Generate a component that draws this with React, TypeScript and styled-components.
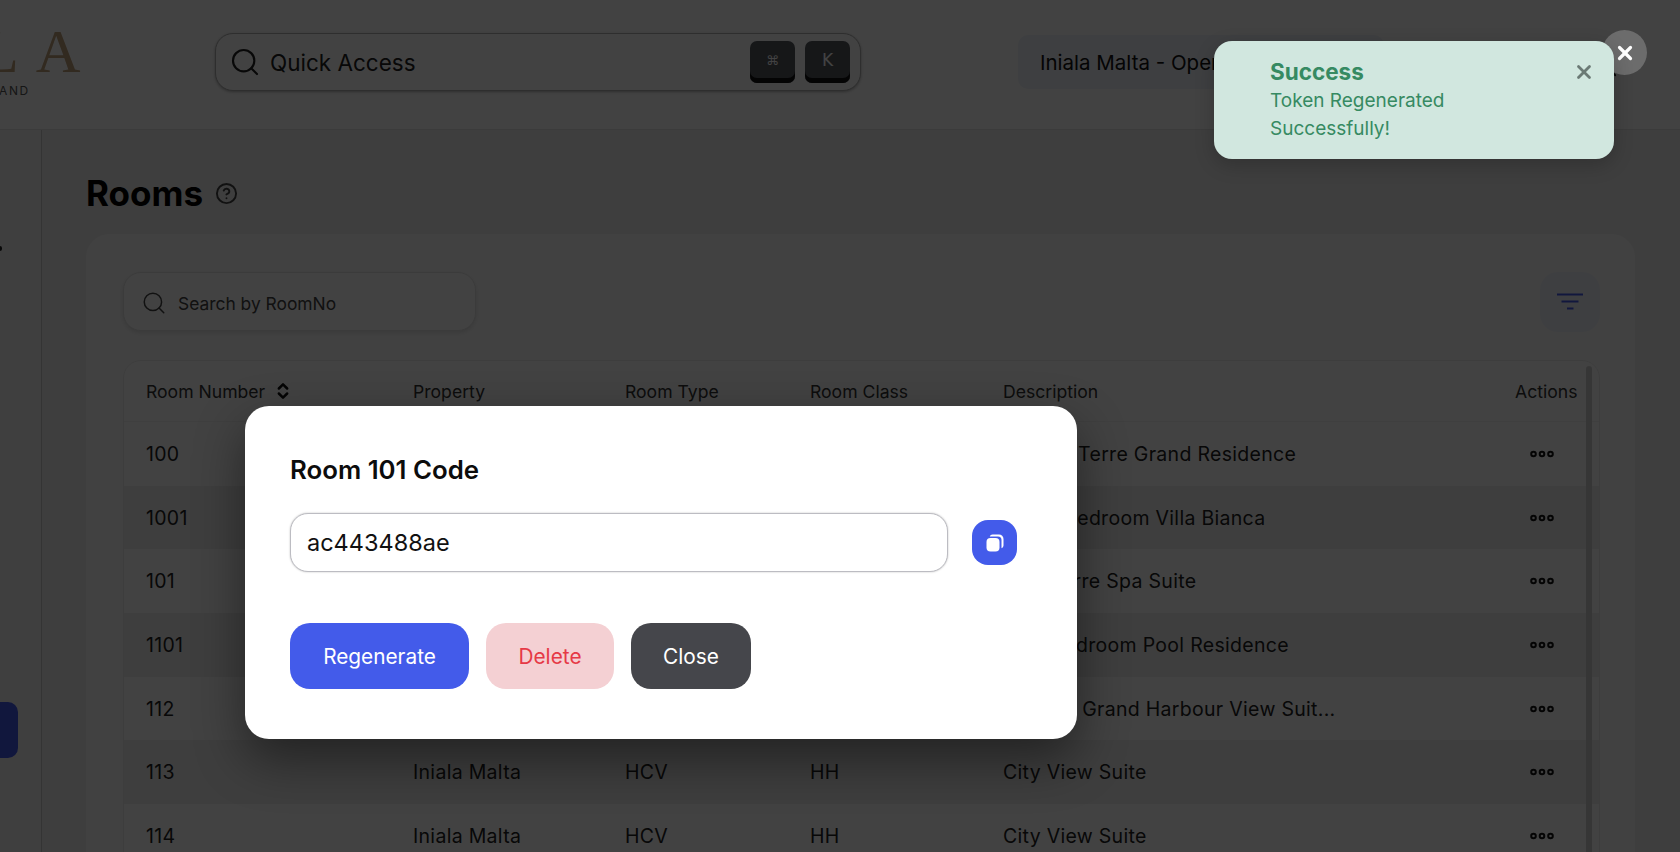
import React from 'react'
import styled, { createGlobalStyle } from 'styled-components'
import { ChevronsUpDown, CircleHelp, Search, X } from 'lucide-react'

const rooms = [
    { no: '100', type: 'HCV', cls: 'HH', desc: 'Pieds à Terre Grand Residence' },
    { no: '1001', type: 'HCV', cls: 'HH', desc: 'Three Bedroom Villa Bianca' },
    { no: '101', type: 'HCV', cls: 'HH', desc: 'Pied Terre Spa Suite' },
    { no: '1101', type: 'HCV', cls: 'HH', desc: 'Four Bedroom Pool Residence' },
    { no: '112', type: 'HCV', cls: 'HH', desc: 'Premier Grand Harbour View Suit...' },
    { no: '113', type: 'HCV', cls: 'HH', desc: 'City View Suite' },
    { no: '114', type: 'HCV', cls: 'HH', desc: 'City View Suite' },
]

const GlobalStyle = createGlobalStyle`
    html, body {
        margin: 0;
        height: 100%;
        overflow: hidden;
        font-family: Inter, "Noto Sans", sans-serif;
    }
    * { box-sizing: border-box; }
`

const Page = styled.div`
    position: relative;
    display: flex;
    flex-direction: column;
    height: 852px;
    overflow: hidden;
    background: #f0f0f0;
    color: #222;
`

const Header = styled.header`
    display: flex;
    align-items: center;
    flex: none;
    height: 130px;
    background: #fff;
    border-bottom: 1px solid #e2e2e2;
`

const Logo = styled.div`
    flex: none;
    width: 215px;
    height: 80px;
    overflow: hidden;
    color: #c0a17b;
`

const LogoWord = styled.div`
    margin-left: -19px;
    font-family: "Liberation Serif", serif;
    font-size: 62px;
    line-height: 52px;
    letter-spacing: 17px;
`

const LogoTag = styled.div`
    margin: 7px 0 0 -1px;
    font-size: 12px;
    line-height: 14px;
    letter-spacing: 1.6px;
    color: #555;
`

const QuickSearch = styled.div`
    display: flex;
    align-items: center;
    width: 646px;
    height: 58px;
    margin-top: -5px;
    padding: 0 10px 0 13px;
    gap: 9px;
    background: #fff;
    border: 1.5px solid #b0b0b0;
    border-radius: 18px;
    box-shadow: 0 1px 3px rgba(0, 0, 0, 0.3);
    font-size: 22.5px;
    color: #222;
`

const QuickLabel = styled.span`
    flex: 1;
`

const Key = styled.span<{ $small?: boolean }>`
    display: flex;
    align-items: center;
    justify-content: center;
    width: 45px;
    height: 42px;
    margin-left: 1px;
    padding-bottom: 4px;
    background: #55585f;
    border-radius: 7px;
    box-shadow: inset 0 -5px 0 #131313;
    font-family: "DejaVu Sans", Inter, sans-serif;
    font-size: ${p => (p.$small ? '13px' : '17px')};
    color: #fff;
`

const SiteSelect = styled.div`
    display: flex;
    align-items: center;
    width: 366px;
    height: 54px;
    margin: -5px 0 0 157px;
    padding-left: 22px;
    background: #f0f3f9;
    border-radius: 10px;
    font-size: 20.5px;
    color: #111;
    white-space: nowrap;
`

const HeaderIcon = styled.div`
    margin: 8px 0 0 212px;
    color: #222;
`

const Body = styled.div`
    display: flex;
    flex: 1;
    min-height: 0;
`

const Sidebar = styled.aside`
    display: flex;
    flex-direction: column;
    flex: none;
    width: 42px;
    background: #f4f4f4;
    border-right: 1px solid #c8c8c8;
`

const SideMark = styled.span`
    width: 2px;
    height: 5px;
    margin-top: 116px;
    background: #222;
    border-radius: 0 3px 3px 0;
`

const SideActive = styled.span`
    width: 18px;
    height: 56px;
    margin-top: 451px;
    background: #435bea;
    border-radius: 0 10px 10px 0;
`

const Main = styled.main`
    flex: 1;
    min-width: 0;
    padding: 40px 45px 0 44px;
`

const TitleRow = styled.div`
    display: flex;
    align-items: center;
    gap: 12px;
    height: 46px;
    color: #444;
`

const Title = styled.h1`
    margin: 0;
    font-size: 35px;
    font-weight: 700;
    color: #000;
`

const Card = styled.section`
    margin-top: 18px;
    padding: 38px 35px 0 37px;
    background: #fcfcfc;
    border-radius: 24px 24px 0 0;
    height: 700px;
`

const Toolbar = styled.div`
    display: flex;
    justify-content: space-between;
`

const RoomSearch = styled.div`
    display: flex;
    align-items: center;
    gap: 11px;
    width: 353px;
    height: 59px;
    padding: 3px 0 0 17px;
    background: #fff;
    border: 1px solid #e4e4e4;
    border-radius: 18px;
    box-shadow: 0 2px 5px rgba(0, 0, 0, 0.12);
    font-size: 17.4px;
    color: #444;
`

const FilterButton = styled.div`
    display: flex;
    align-items: center;
    justify-content: center;
    width: 60px;
    height: 60px;
    background: #f0f3f9;
    border-radius: 18px;
`

const TableBox = styled.div`
    position: relative;
    margin-top: 28px;
    height: 640px;
    background: #fff;
    border: 1px solid #ececec;
    border-radius: 18px 18px 0 0;
    overflow: hidden;
    font-size: 19.5px;
    letter-spacing: 0.3px;
    color: #222;
`

const Scrollbar = styled.div`
    position: absolute;
    top: 5px;
    right: 7px;
    bottom: 0;
    width: 6px;
    background: #d2d2d2;
    border-radius: 3px;
`

const columns = `
    display: grid;
    grid-template-columns: 267px 212px 185px 193px 1fr 61px;
    align-items: center;
    padding: 0 23px 0 22px;
`

const HeadRow = styled.div`
    ${columns}
    height: 61px;
    font-size: 17.6px;
    letter-spacing: 0;
    color: #333;
    border-bottom: 1px solid #f2f2f2;
`

const HeadCell = styled.div`
    display: flex;
    align-items: center;
    gap: 8px;
    white-space: nowrap;
`

const Row = styled.div<{ $shaded: boolean }>`
    ${columns}
    height: 63.7px;
    background: ${p => (p.$shaded ? '#f0f0f0' : '#fff')};
`

const Cell = styled.div`
    white-space: nowrap;
`

const DotsCell = styled.div`
    display: flex;
    margin-left: 15px;
`

const Overlay = styled.div`
    position: absolute;
    inset: 0;
    background: rgba(0, 0, 0, 0.74);
`

const Modal = styled.div`
    position: absolute;
    left: 245px;
    top: 406px;
    width: 832px;
    height: 333px;
    padding: 47px 45px 0;
    background: #fff;
    border-radius: 24px;
    box-shadow: 0 20px 50px rgba(0, 0, 0, 0.45);
`

const ModalTitle = styled.h2`
    margin: 0;
    font-size: 25.8px;
    line-height: 34px;
    font-weight: 600;
    color: #0c0c0c;
`

const CodeRow = styled.div`
    display: flex;
    align-items: center;
    gap: 24px;
    margin-top: 26px;
`

const CodeField = styled.div`
    display: flex;
    align-items: center;
    width: 658px;
    height: 59px;
    padding-left: 16px;
    background: #fff;
    border: 1.5px solid #bcbcc2;
    border-radius: 18px;
    box-shadow: 0 0 2px rgba(0, 0, 0, 0.25);
    font-size: 23.5px;
    color: #111;
`

const CopyButton = styled.button`
    display: flex;
    align-items: center;
    justify-content: center;
    width: 45px;
    height: 45px;
    padding: 0;
    background: #435bea;
    border: 0;
    border-radius: 16px;
`

const Actions = styled.div`
    display: flex;
    gap: 17px;
    margin-top: 51px;
`

const ActionButton = styled.button<{ $bg: string; $fg: string; $w: number }>`
    width: ${p => p.$w}px;
    height: 66px;
    padding: 0;
    background: ${p => p.$bg};
    color: ${p => p.$fg};
    border: 0;
    border-radius: 20px;
    font-family: inherit;
    font-size: 20.8px;
`

const Toast = styled.div`
    position: absolute;
    left: 1214px;
    top: 41px;
    width: 400px;
    height: 118px;
    padding: 16px 0 0 56px;
    background: #d1e7df;
    border-radius: 18px;
    box-shadow: 0 6px 20px rgba(0, 0, 0, 0.2);
    color: #368a62;
`

const ToastTitle = styled.div`
    font-size: 22.5px;
    line-height: 30px;
    font-weight: 700;
`

const ToastText = styled.div`
    width: 220px;
    font-size: 19px;
    line-height: 27.5px;
`

const ToastClose = styled.span`
    position: absolute;
    top: 20px;
    right: 19px;
    color: #6b7a75;
    line-height: 0;
`

const ModalClose = styled.span`
    position: absolute;
    left: 1602px;
    top: 30px;
    display: flex;
    align-items: center;
    justify-content: center;
    width: 45px;
    height: 45px;
    background: #6c6c6c;
    border-radius: 50%;
    color: #fff;
`

const FilterIcon = () => (
    <svg width="28" height="20" viewBox="0 0 28 20" fill="none" stroke="#435bea" strokeWidth="2">
        <path d="M1 2.5h26M5.500 9.500h17M11 16.500h6.500" />
    </svg>
)

const DotsIcon = () => (
    <svg width="24" height="8" viewBox="0 0 24 8" fill="none" stroke="#111" strokeWidth="2">
        <circle cx="3.500" cy="4" r="2.300" />
        <circle cx="12" cy="4" r="2.300" />
        <circle cx="20.500" cy="4" r="2.300" />
    </svg>
)

const CopyIcon = () => (
    <svg width="20" height="20" viewBox="0 0 20 20" fill="#fff">
        <path d="M7.500 1.500h6.500a4.500 4.500 0 0 1 4.500 4.500v6.500a3 3 0 0 1-2 2.800V7a3.500 3.500 0 0 0-3.500-3.500H4.700a3 3 0 0 1 2.800-2z" />
        <rect x="1.500" y="5" width="13" height="13.500" rx="4" />
    </svg>
)

const App = () => {
    return (
        <Page>
            <GlobalStyle />

            <Header>
                <Logo>
                    <LogoWord>LA</LogoWord>
                    <LogoTag>AND</LogoTag>
                </Logo>
                <QuickSearch>
                    <Search size={32} strokeWidth={1.6} />
                    <QuickLabel>Quick Access</QuickLabel>
                    <Key $small>⌘</Key>
                    <Key>K</Key>
                </QuickSearch>
                <SiteSelect>Iniala Malta - Operations</SiteSelect>
                <HeaderIcon>
                    <Search size={22} strokeWidth={2} />
                </HeaderIcon>
            </Header>

            <Body>
                <Sidebar>
                    <SideMark />
                    <SideActive />
                </Sidebar>

                <Main>
                    <TitleRow>
                        <Title>Rooms</Title>
                        <CircleHelp size={23} strokeWidth={2} />
                    </TitleRow>

                    <Card>
                        <Toolbar>
                            <RoomSearch>
                                <Search size={26} strokeWidth={1.4} />
                                Search by RoomNo
                            </RoomSearch>
                            <FilterButton>
                                <FilterIcon />
                            </FilterButton>
                        </Toolbar>

                        <TableBox>
                            <HeadRow>
                                <HeadCell>
                                    Room Number
                                    <ChevronsUpDown size={20} strokeWidth={3} color="#111" />
                                </HeadCell>
                                <HeadCell>Property</HeadCell>
                                <HeadCell>Room Type</HeadCell>
                                <HeadCell>Room Class</HeadCell>
                                <HeadCell>Description</HeadCell>
                                <HeadCell>Actions</HeadCell>
                            </HeadRow>
                            {rooms.map((room, i) => (
                                <Row key={room.no} $shaded={i % 2 === 1}>
                                    <Cell>{room.no}</Cell>
                                    <Cell>Iniala Malta</Cell>
                                    <Cell>{room.type}</Cell>
                                    <Cell>{room.cls}</Cell>
                                    <Cell>{room.desc}</Cell>
                                    <DotsCell>
                                        <DotsIcon />
                                    </DotsCell>
                                </Row>
                            ))}
                            <Scrollbar />
                        </TableBox>
                    </Card>
                </Main>
            </Body>

            <Overlay />

            <Modal>
                <ModalTitle>Room 101 Code</ModalTitle>
                <CodeRow>
                    <CodeField>ac443488ae</CodeField>
                    <CopyButton>
                        <CopyIcon />
                    </CopyButton>
                </CodeRow>
                <Actions>
                    <ActionButton $bg="#435bea" $fg="#fff" $w={179}>Regenerate</ActionButton>
                    <ActionButton $bg="#f4d0d3" $fg="#e63946" $w={128}>Delete</ActionButton>
                    <ActionButton $bg="#45464b" $fg="#fff" $w={120}>Close</ActionButton>
                </Actions>
            </Modal>

            <ModalClose>
                <X size={22} strokeWidth={3.5} />
            </ModalClose>

            <Toast>
                <ToastTitle>Success</ToastTitle>
                <ToastText>Token Regenerated Successfully!</ToastText>
                <ToastClose>
                    <X size={22} strokeWidth={3} />
                </ToastClose>
            </Toast>
        </Page>
    )
}

export default App
